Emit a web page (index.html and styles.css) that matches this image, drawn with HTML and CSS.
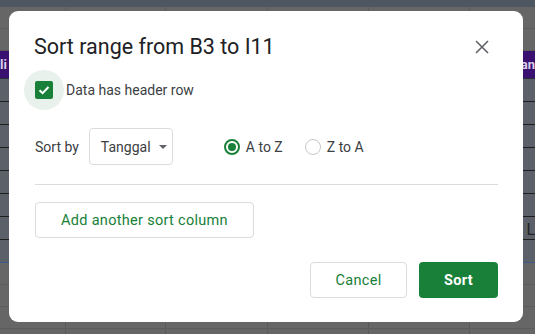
FILE: index.html
```html
<!DOCTYPE html>
<html>
<head>
    <meta charset="utf-8">
    <link rel="stylesheet" href="styles.css">
</head>
<body>
    <!-- hoja de fondo, ya oscurecida por el modal -->
    <div class="sheet">
        <div class="toolbar-band"></div>
        <div class="sheet-row"></div>
        <div class="sheet-row"></div>
        <div class="sheet-row header-row">
            <span class="hdr-left">li</span>
            <span class="hdr-right">an</span>
        </div>
        <div class="sheet-row sel"></div>
        <div class="sheet-row sel"></div>
        <div class="sheet-row sel"></div>
        <div class="sheet-row sel"></div>
        <div class="sheet-row sel"></div>
        <div class="sheet-row sel"></div>
        <div class="sheet-row sel"><span class="hdr-right cell-txt">L</span></div>
        <div class="sheet-row sel last-sel"></div>
        <div class="sheet-row"></div>
        <div class="sheet-row"></div>
        <div class="sheet-row"></div>
    </div>

    <!-- dialogo de ordenar -->
    <div class="dialog">
        <div class="title-row">
            <h1 class="title">Sort range from B3 to I11</h1>
            <button class="close-btn" aria-label="Close">
                <svg width="14" height="14" viewBox="0 0 14 14">
                    <path d="M1 1 L13 13 M13 1 L1 13" stroke="#5f6368" stroke-width="1.6" fill="none"/>
                </svg>
            </button>
        </div>

        <div class="check-row">
            <div class="check-halo">
                <div class="checkbox">
                    <svg width="14" height="14" viewBox="0 0 14 14">
                        <path d="M2.5 7.2 L5.6 10.2 L11.5 4" stroke="#fff" stroke-width="2" fill="none"/>
                    </svg>
                </div>
            </div>
            <span class="check-label">Data has header row</span>
        </div>

        <div class="sort-row">
            <span class="sort-label">Sort by</span>
            <div class="dropdown">
                <span>Tanggal</span>
                <span class="caret"></span>
            </div>
            <label class="radio-opt first">
                <span class="radio on"></span>
                <span>A to Z</span>
            </label>
            <label class="radio-opt">
                <span class="radio"></span>
                <span>Z to A</span>
            </label>
        </div>

        <div class="divider"></div>

        <button class="btn add-btn">Add another sort column</button>

        <div class="footer">
            <button class="btn cancel-btn">Cancel</button>
            <button class="btn sort-btn">Sort</button>
        </div>
    </div>
</body>
</html>
```

FILE: styles.css
```css
body {
    margin: 0;
    width: 535px;
    height: 334px;
    overflow: hidden;
    font-family: 'Roboto', 'Liberation Sans', sans-serif;
    background-color: #666666;
    position: relative;
}

/* ================= HOJA DE FONDO ================= */

.sheet {
    display: flex;
    flex-direction: column;
    height: 334px;
    background-image: linear-gradient(to right,
        transparent 65px, #5a5a5a 65px, #5a5a5a 66px, transparent 66px,
        transparent 165px, #5a5a5a 165px, #5a5a5a 166px, transparent 166px,
        transparent 267px, #5a5a5a 267px, #5a5a5a 268px, transparent 268px,
        transparent 368px, #5a5a5a 368px, #5a5a5a 369px, transparent 369px,
        transparent 469px, #5a5a5a 469px, #5a5a5a 470px, transparent 470px);
}

.toolbar-band {
    height: 7px;
    background-color: #4e5661;
    flex-shrink: 0;
}

.sheet-row {
    height: 21px;
    border-bottom: 1px solid #5b5b5b;
    flex-shrink: 0;
    position: relative;
}

.header-row {
    height: 27px;
    background-color: #3a1070;
    border-bottom: 1px solid #2d2d3a;
    color: #d8d0e8;
    font-weight: bold;
    font-size: 13px;
}

.hdr-left {
    position: absolute;
    left: 0;
    top: 6px;
}

.hdr-right {
    position: absolute;
    right: 0;
    top: 6px;
}

.cell-txt {
    color: #222;
    font-weight: normal;
    top: 3px;
}

.sel {
    height: 22px;
    background-color: #5c6169;
    border-bottom: 1px solid #1e1e1e;
}

.last-sel {
    border-bottom: 1px solid #3d5a8a;
}

/* ================= DIALOGO ================= */

.dialog {
    position: absolute;
    left: 9px;
    top: 11px;
    width: 514px;
    height: 311px;
    box-sizing: border-box;
    background-color: #ffffff;
    border-radius: 9px;
    padding: 22px 25px 24px 26px;
    display: flex;
    flex-direction: column;
}

.title-row {
    display: flex;
    align-items: center;
    justify-content: space-between;
    height: 28px;
}

.title {
    margin: 0;
    font-family: 'Roboto', 'Open Sans', sans-serif;
    font-weight: normal;
    font-size: 21.5px;
    line-height: 28px;
    color: #202124;
    margin-left: -1px;
}

.close-btn {
    border: none;
    background: none;
    padding: 0;
    width: 24px;
    height: 24px;
    margin-right: 4px;
    display: flex;
    align-items: center;
    justify-content: center;
}

.check-row {
    display: flex;
    align-items: center;
    margin-top: 9px;
    height: 40px;
}

.check-halo {
    width: 40px;
    height: 40px;
    border-radius: 50%;
    background-color: #e9f1ec;
    margin-left: -11px;
    display: flex;
    align-items: center;
    justify-content: center;
}

.checkbox {
    width: 18px;
    height: 18px;
    border-radius: 2px;
    background-color: #188038;
    display: flex;
    align-items: center;
    justify-content: center;
}

.check-label {
    margin-left: 2px;
    font-size: 14px;
    color: #3c4043;
}

.sort-row {
    display: flex;
    align-items: center;
    margin-top: 18px;
    font-size: 14px;
    color: #3c4043;
}

.sort-label {
    margin-right: 10px;
}

.dropdown {
    width: 84px;
    height: 37px;
    box-sizing: border-box;
    border: 1px solid #dadce0;
    border-radius: 4px;
    padding-left: 11px;
    display: flex;
    align-items: center;
    color: #3c4043;
}

.caret {
    margin-left: 8px;
    width: 0;
    height: 0;
    border-left: 4px solid transparent;
    border-right: 4px solid transparent;
    border-top: 4px solid #5f6368;
}

.radio-opt {
    display: flex;
    align-items: center;
    margin-left: 22px;
}

.radio-opt.first {
    margin-left: 51px;
}

.radio {
    width: 16px;
    height: 16px;
    box-sizing: border-box;
    border-radius: 50%;
    border: 1.5px solid #c4c7c5;
    margin-right: 6px;
    display: flex;
    align-items: center;
    justify-content: center;
}

.radio.on {
    border: 2px solid #188038;
}

.radio.on::after {
    content: "";
    width: 8px;
    height: 8px;
    border-radius: 50%;
    background-color: #188038;
}

.divider {
    margin-top: 19px;
    height: 1px;
    background-color: #dadce0;
}

.btn {
    font-family: 'Roboto', 'Liberation Sans', sans-serif;
    font-size: 14.5px;
    font-weight: normal;
    letter-spacing: 0.3px;
    height: 36px;
    border-radius: 4px;
    cursor: pointer;
}

.add-btn {
    margin-top: 17px;
    width: 219px;
    background-color: #ffffff;
    border: 1px solid #dadce0;
    color: #188038;
}

.footer {
    margin-top: auto;
    display: flex;
    justify-content: flex-end;
    gap: 12px;
}

.cancel-btn {
    width: 97px;
    background-color: #ffffff;
    border: 1px solid #dadce0;
    color: #188038;
}

.sort-btn {
    width: 79px;
    background-color: #188038;
    border: none;
    color: #ffffff;
    font-weight: bold;
}
```
